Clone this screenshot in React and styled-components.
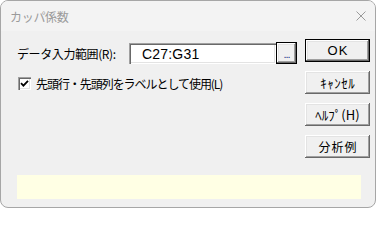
import React from 'react'
import styled, { createGlobalStyle } from 'styled-components'

const GlobalStyle = createGlobalStyle`
    html, body {
        margin: 0;
        padding: 0;
        background: #ffffff;
    }
`

const uiFont = `"Noto Sans CJK JP", "Noto Sans", sans-serif`

const Window = styled.div`
    width: 376px;
    height: 208px;
    box-sizing: border-box;
    border: 1px solid #a6a6a6;
    border-radius: 8px;
    overflow: hidden;
    display: flex;
    flex-direction: column;
    background: #f0f0f0;
    font-family: ${uiFont};
    font-weight: normal;
    color: #000;
`

const TitleBar = styled.div`
    height: 30px;
    flex-shrink: 0;
    background: #f3f3f3;
    display: flex;
    align-items: center;
    justify-content: space-between;
    padding: 0 8px 0 9px;
`

const Title = styled.span`
    font-size: 12px;
    color: #9a9a9a;
    letter-spacing: -0.3px;
`

const CloseIcon = styled.svg`
    width: 10px;
    height: 10px;
    margin-right: 1px;
`

const Body = styled.div`
    flex: 1;
    display: flex;
    flex-direction: column;
    justify-content: space-between;
    padding: 8px 5px 8px 16px;
`

const Main = styled.div`
    display: flex;
`

const Form = styled.div`
    width: 288px;
    padding-top: 3px;
    display: flex;
    flex-direction: column;
`

const Row = styled.div`
    display: flex;
    align-items: center;
    height: 22px;
`

const Label = styled.span`
    width: 112px;
    font-size: 12px;
    letter-spacing: -0.4px;
    white-space: nowrap;
`

const sunken = `
    box-shadow: inset 1px 1px #a0a0a0, inset 2px 2px #696969,
        inset -1px -1px #ffffff, inset -2px -2px #e3e3e3;
`

const raised = `
    box-shadow: inset -1px -1px #696969, inset 1px 1px #ffffff,
        inset -2px -2px #a0a0a0, inset 2px 2px #e3e3e3;
`

const Input = styled.div`
    width: 147px;
    height: 21px;
    box-sizing: border-box;
    background: #fff;
    ${sunken}
    display: flex;
    align-items: center;
    padding: 1px 0 0 13px;
    font-family: "Liberation Sans", Arial, sans-serif;
    font-size: 14px;
    letter-spacing: 0.2px;
`

const Browse = styled.div`
    width: 21px;
    height: 22px;
    box-sizing: border-box;
    border: 1px solid #000;
    background: #f0f0f0;
    ${raised}
    display: flex;
    align-items: center;
    justify-content: center;
    font-family: "Liberation Sans", Arial, sans-serif;
    font-size: 11px;
    letter-spacing: -1px;
    color: #1a3a8a;
    padding-top: 1px;
`

const CheckRow = styled.label`
    display: flex;
    align-items: center;
    margin-top: 13px;
    height: 13px;
    font-size: 12px;
    letter-spacing: -1.05px;
    white-space: nowrap;
`

const Box = styled.span`
    width: 13px;
    height: 13px;
    box-sizing: border-box;
    background: #fff;
    ${sunken}
    display: flex;
    align-items: center;
    justify-content: center;
    margin: 0 5px 0 1px;
`

const Buttons = styled.div`
    display: flex;
    flex-direction: column;
    gap: 9px;
    width: 65px;
`

const Button = styled.div`
    height: 23px;
    box-sizing: border-box;
    background: #f0f0f0;
    border: ${p => (p.$default ? '1px solid #000' : 'none')};
    ${raised}
    display: flex;
    align-items: center;
    justify-content: center;
    font-family: ${p => (p.$latin ? '"Liberation Sans", Arial, sans-serif' : uiFont)};
    font-size: ${p => p.$size || '12px'};
    font-weight: normal;
    letter-spacing: ${p => p.$spacing || '0'};
    white-space: nowrap;
    padding-left: ${p => p.$spacing || '0'};
`

const StatusBar = styled.div`
    height: 24px;
    margin-right: 9px;
    background: #ffffe4;
`

export default function App() {
    return (
        <>
            <GlobalStyle />
            <Window>
                <TitleBar>
                    <Title>カッパ係数</Title>
                    <CloseIcon viewBox="0 0 10 10">
                        <path d="M0.5 0.5 L9.5 9.5 M9.5 0.5 L0.5 9.5" stroke="#9a9a9a" strokeWidth="1" fill="none" />
                    </CloseIcon>
                </TitleBar>
                <Body>
                    <Main>
                        <Form>
                            <Row>
                                <Label>データ入力範囲(R):</Label>
                                <Input>C27:G31</Input>
                                <Browse>...</Browse>
                            </Row>
                            <CheckRow>
                                <Box>
                                    <svg width="9" height="9" viewBox="0 0 9 9">
                                        <path d="M1 4.2 L3.4 6.6 L8 1.8" stroke="#000" strokeWidth="1.8" fill="none" />
                                    </svg>
                                </Box>
                                先頭行・先頭列をラベルとして使用(L)
                            </CheckRow>
                        </Form>
                        <Buttons>
                            <Button $default $latin $size="13px" $spacing="1px">OK</Button>
                            <Button $size="13px" $spacing="0.5px">ｷｬﾝｾﾙ</Button>
                            <Button $size="13px">ﾍﾙﾌﾟ(H)</Button>
                            <Button $spacing="1px">分析例</Button>
                        </Buttons>
                    </Main>
                    <StatusBar />
                </Body>
            </Window>
        </>
    )
}
